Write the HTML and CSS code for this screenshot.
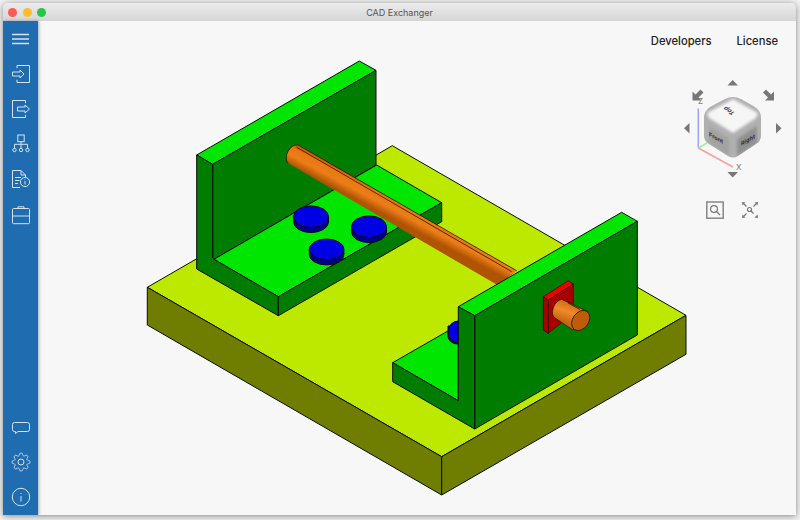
FILE: index.html
```html
<!DOCTYPE html>
<html lang="en">
<head>
    <meta charset="UTF-8">
    <meta name="viewport" content="width=device-width, initial-scale=1.0">
    <title>CAD Exchanger</title>
    <link rel="stylesheet" href="styles.css">
</head>
<body>

    <div class="window">
        <div class="titlebar">
            <div class="lights">
                <span class="light light-red"></span>
                <span class="light light-yellow"></span>
                <span class="light light-green"></span>
            </div>
            <span class="title">CAD Exchanger</span>
        </div>

        <div class="content">
            <nav class="sidebar">
                <div class="side-group">
                    <a class="side-btn"><svg viewBox="0 0 24 24"><path d="M3 7.5H20M3 12H20M3 16.5H20" stroke-width="1.5"/></svg></a>
                    <a class="side-btn"><svg viewBox="0 0 24 24"><path d="M8 6.2V3.5H20.5V20.5H8V17.8"/><path d="M3.5 10H11V8L15 12L11 16V14H3.5Z"/></svg></a>
                    <a class="side-btn"><svg viewBox="0 0 24 24"><path d="M16.5 6.2V3.5H3.5V20.5H16.5V17.8"/><path d="M8.5 10H16V8L20.5 12L16 16V14H8.5Z"/></svg></a>
                    <a class="side-btn"><svg viewBox="0 0 24 24"><rect x="8.8" y="3" width="6.4" height="6.7"/><path d="M12 9.7V16.3M5.5 16.3V12.3H18.5V16.3"/><circle cx="5.5" cy="18" r="1.7"/><circle cx="12" cy="18" r="1.7"/><circle cx="18.5" cy="18" r="1.7"/></svg></a>
                    <a class="side-btn"><svg viewBox="0 0 24 24"><path d="M11 20.5H3.5V3.5H12L16.5 8V10"/><path d="M12 3.5V8H16.5"/><path d="M6 10.5H12M6 13.5H10.5M6 16.5H9"/><circle cx="16" cy="15" r="4.6"/><path d="M16 14V17.5M16 12.4V13"/></svg></a>
                    <a class="side-btn"><svg viewBox="0 0 24 24"><rect x="3.5" y="5.5" width="17" height="15.2" rx="1"/><path d="M3.5 13H20.5M9 5.5V3.8H15V5.5"/></svg></a>
                </div>
                <div class="side-group side-bottom">
                    <a class="side-btn"><svg viewBox="0 0 24 24"><path d="M5.5 7.5H18.5Q20.5 7.5 20.5 9.5V14.5Q20.5 16.5 18.5 16.5H9L6.5 18.5V16.5H5.5Q3.5 16.5 3.5 14.5V9.5Q3.5 7.5 5.5 7.5Z"/></svg></a>
                    <a class="side-btn"><svg viewBox="0 0 24 24"><circle cx="12" cy="12" r="3"/><path transform="translate(2.2 2.2) scale(.82)" d="M19.4 15a1.65 1.65 0 0 0 .33 1.82l.06.06a2 2 0 0 1 0 2.83 2 2 0 0 1-2.83 0l-.06-.06a1.65 1.65 0 0 0-1.82-.33 1.65 1.65 0 0 0-1 1.51V21a2 2 0 0 1-2 2 2 2 0 0 1-2-2v-.09A1.65 1.65 0 0 0 9 19.4a1.65 1.65 0 0 0-1.82.33l-.06.06a2 2 0 0 1-2.83 0 2 2 0 0 1 0-2.83l.06-.06a1.65 1.65 0 0 0 .33-1.82 1.65 1.65 0 0 0-1.51-1H3a2 2 0 0 1-2-2 2 2 0 0 1 2-2h.09A1.65 1.65 0 0 0 4.6 9a1.65 1.65 0 0 0-.33-1.82l-.06-.06a2 2 0 0 1 0-2.83 2 2 0 0 1 2.83 0l.06.06a1.65 1.65 0 0 0 1.82.33H9a1.65 1.65 0 0 0 1-1.51V3a2 2 0 0 1 2-2 2 2 0 0 1 2 2v.09a1.65 1.65 0 0 0 1 1.51 1.65 1.65 0 0 0 1.82-.33l.06-.06a2 2 0 0 1 2.83 0 2 2 0 0 1 0 2.83l-.06.06a1.65 1.65 0 0 0-.33 1.82V9a1.65 1.65 0 0 0 1.51 1H21a2 2 0 0 1 2 2 2 2 0 0 1-2 2h-.09a1.65 1.65 0 0 0-1.51 1z"/></svg></a>
                    <a class="side-btn"><svg viewBox="0 0 24 24"><circle cx="12" cy="12" r="8.7"/><path d="M12 11V16.5M12 8V9"/></svg></a>
                </div>
            </nav>

            <main class="viewport">
                <!-- model, viewBox uses the same x/y as the window screenshot -->
                <svg class="model" viewBox="38 21 758 494">
                    <defs>
                        <linearGradient id="rod" gradientUnits="userSpaceOnUse" x1="298" y1="145" x2="288.3" y2="163.3">
                            <stop offset="0" stop-color="#d05c06"/>
                            <stop offset=".18" stop-color="#dc6606"/>
                            <stop offset=".22" stop-color="#e87810"/>
                            <stop offset=".6" stop-color="#ec7e18"/>
                            <stop offset="1" stop-color="#b05404"/>
                        </linearGradient>
                        <linearGradient id="stub" gradientUnits="userSpaceOnUse" x1="562" y1="299" x2="555" y2="318">
                            <stop offset="0" stop-color="#d46a10"/>
                            <stop offset=".5" stop-color="#ee8a2c"/>
                            <stop offset="1" stop-color="#c8660e"/>
                        </linearGradient>
                    </defs>

                    <g class="edges">
                        <!-- base plate -->
                        <polygon class="lime" points="147.3,287.3 392.3,145.7 686,315.3 441.7,456.7"/>
                        <polygon class="olive" points="147.3,287.3 441.7,456.7 441.7,495 147.3,325"/>
                        <polygon class="olive" points="441.7,456.7 686,315.3 686,354.3 441.7,495"/>

                        <!-- left bracket -->
                        <polygon class="green" points="196.7,155 359.3,61 376,70.3 212.7,164.3"/>
                        <polygon class="dark" points="212.7,164.3 376,70.3 376,165 214,259.3 212.7,258"/>
                        <polygon class="green" points="214,259.3 376.7,165 441.7,202.7 278.3,296.7"/>
                        <polygon class="dark" points="196.7,155 212.7,164.3 212.7,258 214,259.3 278.3,296.7 278.3,315.7 196.7,269"/>
                        <polygon class="dark" points="278.3,296.7 441.7,202.7 441.7,221.7 278.3,315.7"/>

                        <!-- pins -->
                        <path class="navy" d="M293.5 216.7V222A17.5 10.5 0 0 0 328.5 222V216.7Z"/>
                        <ellipse class="blue" cx="311" cy="216.7" rx="17.5" ry="10.8"/>
                        <path class="navy" d="M351.5 226.7V232A17.5 10.5 0 0 0 386.5 232V226.7Z"/>
                        <ellipse class="blue" cx="369" cy="226.7" rx="17.5" ry="10.8"/>
                        <path class="navy" d="M309.3 249.3V254.6A17.3 10.3 0 0 0 343.9 254.6V249.3Z"/>
                        <ellipse class="blue" cx="326.6" cy="249.3" rx="17.3" ry="10.3"/>
                    </g>

                    <!-- long shaft -->
                    <path d="M298 145L516.7 270.7L498.3 285.5L288.3 163.3A7 10.5 28 0 1 298 145Z" fill="url(#rod)"/>
                    <path class="line line-open" d="M288.3 163.3A7 10.5 28 0 1 298 145L516.7 270.7"/>
                    <path class="line line-open" d="M296.7 147.3L511.7 271.7"/>

                    <g class="edges">
                        <!-- right bracket -->
                        <polygon class="green" points="392.7,362.7 458.3,325 458.3,400.7"/>
                        <path class="navy" d="M448 326V337Q450 344 458.3 344V326Z"/>
                        <ellipse class="blue" cx="458.3" cy="332" rx="10.3" ry="11" stroke="none"/>
                        <polygon class="green" points="458.3,306.7 621.7,212.3 637.3,221.3 474.7,315.7"/>
                        <polygon class="dark" points="474.7,315.7 637.3,221.3 637.3,335 474.7,429"/>
                        <polygon class="dark" points="458.3,306.7 474.7,315.7 474.7,429 392.7,381.7 392.7,362.7 458.3,400.7"/>
                    </g>

                    <g class="edges edges-thin">
                        <!-- red block -->
                        <polygon class="red" points="543.3,296.7 568.3,280.7 573.3,284 548.3,300"/>
                        <polygon class="maroon" points="548.3,300 573.3,284 573.3,313 548.3,333.3"/>
                        <polygon class="maroon" points="543.3,296.7 548.3,300 548.3,333.3 543.3,330"/>
                    </g>

                    <!-- short shaft end -->
                    <path class="line" fill="url(#stub)" d="M561.7 299.3L588 311.7L573 330L555 318A7 10.5 28 0 1 561.7 299.3Z"/>
                    <ellipse class="line" fill="#bf5c08" cx="580.7" cy="320.5" rx="8" ry="11" transform="rotate(35 580.7 320.5)"/>
                    <path class="line line-open" d="M568 303L580 309.5"/>
                </svg>

                <div class="topnav">
                    <a>Developers</a>
                    <a>License</a>
                </div>

                <svg class="gizmo" viewBox="680 70 110 160">
                    <defs>
                        <clipPath id="cube-clip">
                            <path d="M733 97Q737 97 741 99L755 107Q761 111 761 118V136Q761 141 756 144L738 156Q733 159 728 156L709 144Q704 141 704 136V118Q704 111 710 107L725 99Q729 97 733 97Z"/>
                        </clipPath>
                        <filter id="soft" x="-20%" y="-20%" width="140%" height="140%">
                            <feGaussianBlur stdDeviation="1.6"/>
                        </filter>
                    </defs>

                    <path class="arrow" d="M727.5 85.5L732.7 80L738 85.5Z"/>
                    <path class="arrow" d="M727.5 172L732.7 177.5L738 172Z"/>
                    <path class="arrow" d="M689.5 123L684 128.3L689.5 133.5Z"/>
                    <path class="arrow" d="M776 123L781.5 128.3L776 133.5Z"/>
                    <path class="arrow" d="M692.5 100.5V91.5L695.5 94.5L700.5 89.5L703.5 92.5L698.5 97.5L701.5 100.5Z"/>
                    <path class="arrow" d="M774 100.5V91.5L771 94.5L766 89.5L763 92.5L768 97.5L765 100.5Z"/>

                    <path class="axis-z" d="M698.3 108.5V148"/>
                    <path class="axis-y" d="M698.3 148L707 143"/>
                    <path class="axis-x" d="M698.3 148L733 167"/>
                    <text class="axis-label" x="698" y="104">Z</text>
                    <text class="axis-label" x="736" y="170">X</text>

                    <g clip-path="url(#cube-clip)">
                        <rect x="700" y="92" width="66" height="70" fill="#b0b0b0"/>
                        <g filter="url(#soft)">
                            <polygon fill="#f6f6f6" points="733,99 758,113 756,118 733,133 709,118 707,113"/>
                            <polygon fill="#a2a2a2" points="709,126 729,139 729,156 709,143"/>
                            <polygon fill="#909090" points="757,126 737,139 737,156 757,143"/>
                        </g>
                    </g>
                    <text class="face" transform="matrix(-.8 -.55 .8 -.5 735.5 113)">Top</text>
                    <text class="face" transform="matrix(.85 .48 0 .9 709 136)">Front</text>
                    <text class="face" transform="matrix(.85 -.48 0 .9 741 146)">Right</text>

                    <rect class="zoom-box" x="706.8" y="202" width="16.4" height="16.2"/>
                    <circle class="zoom-glass" cx="714" cy="209" r="3.4"/>
                    <path class="zoom-glass" d="M716.5 211.5L720 215"/>

                    <circle class="zoom-glass" cx="749.5" cy="209.5" r="2"/>
                    <path class="zoom-glass" d="M751 211L753.5 213.5"/>
                    <path class="fit" d="M742 202L745.5 202.5L742.5 205.5Z"/>
                    <path class="fit" d="M758 202L754.5 202.5L757.5 205.5Z"/>
                    <path class="fit" d="M742 218L745.5 217.5L742.5 214.5Z"/>
                    <path class="fit" d="M758 218L754.5 217.5L757.5 214.5Z"/>
                    <path class="zoom-glass" d="M744 204L746.5 206.5M756 204L753.5 206.5M744 216L746.5 213.5"/>
                </svg>
            </main>
        </div>
    </div>

</body>
</html>
```

FILE: styles.css
```css
html, body {
    margin: 0;
    height: 100%;
}

body {
    background-color: #f1f1f1;
    font-family: Inter, "Liberation Sans", sans-serif;
    padding: 3px 4px 5px 3px;
    box-sizing: border-box;
    overflow: hidden;
}

.window {
    display: flex;
    flex-direction: column;
    height: 100%;
    border-radius: 5px 5px 0 0;
    overflow: hidden;
    box-shadow: 0 1px 6px rgba(0, 0, 0, 0.45);
}

.titlebar {
    position: relative;
    display: flex;
    align-items: center;
    justify-content: center;
    height: 18px;
    flex-shrink: 0;
    background: linear-gradient(#ececec, #d5d5d5);
}

.lights {
    position: absolute;
    left: 5px;
    top: 5px;
    display: flex;
    gap: 5.5px;
}

.light {
    width: 9px;
    height: 9px;
    border-radius: 50%;
}

.light-red { background-color: #fc5a55; }
.light-yellow { background-color: #fdbc2e; }
.light-green { background-color: #27c83f; }

.title {
    font-size: 9px;
    color: #555;
}

.content {
    display: flex;
    flex: 1;
    min-height: 0;
}

.sidebar {
    display: flex;
    flex-direction: column;
    justify-content: space-between;
    width: 35px;
    flex-shrink: 0;
    background-color: #1f6cb0;
    box-shadow: 1px 0 3px rgba(0, 0, 0, 0.3);
    z-index: 1;
}

.side-group {
    display: flex;
    flex-direction: column;
}

.side-btn {
    display: flex;
    align-items: center;
    justify-content: center;
    height: 35.2px;
}

.side-btn svg {
    width: 24px;
    height: 24px;
    fill: none;
    stroke: #d5e3f1;
    stroke-width: 1;
}

.viewport {
    position: relative;
    flex: 1;
    background-color: #f7f7f7;
}

.model {
    position: absolute;
    left: 0;
    top: 0;
    width: 758px;
    height: 494px;
}

.model polygon, .model ellipse, .model path {
    stroke-linejoin: round;
}

.edges > * { stroke: #0a0a0a; stroke-width: 1; }
.edges-thin > * { stroke: #3a0000; stroke-width: 0.7; }

.lime { fill: #bde800; }
.olive { fill: #6f7e00; }
.green { fill: #00e600; }
.dark { fill: #007d00; }
.blue { fill: #0000e4; }
.navy { fill: #00008a; }
.red { fill: #ee0000; }
.maroon { fill: #a80000; }

.line {
    stroke: #2a1400;
    stroke-width: 0.8;
}

.line-open { fill: none; }

.topnav {
    position: relative;
    display: flex;
    justify-content: flex-end;
    gap: 25px;
    padding: 13px 18px 0 0;
    font-size: 11.2px;
    font-weight: 500;
    color: #222;
}

.gizmo {
    position: absolute;
    right: 6px;
    top: 49px;
    width: 110px;
    height: 160px;
}

.arrow { fill: #777; }

.axis-z, .axis-y, .axis-x {
    fill: none;
    stroke-width: 1.5;
}

.axis-z { stroke: #a0a0ff; }
.axis-y { stroke: #9fef9f; }
.axis-x { stroke: #ff9c9c; }

.axis-label {
    font-size: 8px;
    fill: #777;
}

.face {
    font-size: 6.5px;
    font-weight: 700;
    fill: #333;
}

.zoom-box {
    fill: none;
    stroke: #888;
    stroke-width: 1.5;
}

.zoom-glass {
    fill: none;
    stroke: #777;
    stroke-width: 1.2;
}

.fit { fill: #777; }
```
